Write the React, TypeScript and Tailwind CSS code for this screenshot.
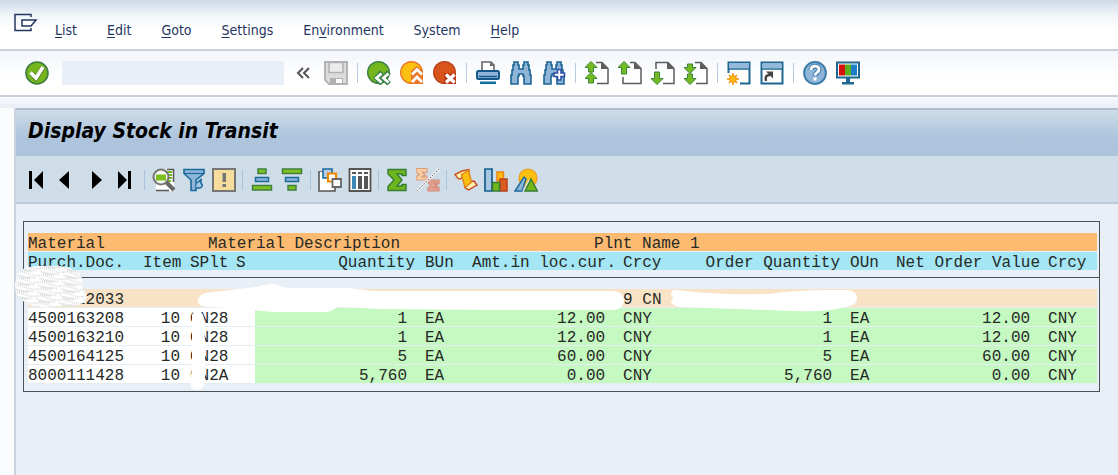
import type { ReactNode } from 'react'

const menuItems = [
  { before: '', key: 'L', after: 'ist' },
  { before: '', key: 'E', after: 'dit' },
  { before: '', key: 'G', after: 'oto' },
  { before: '', key: 'S', after: 'ettings' },
  { before: 'En', key: 'v', after: 'ironment' },
  { before: 'S', key: 'y', after: 'stem' },
  { before: '', key: 'H', after: 'elp' },
]

const rows = [
  { doc: '4500163208', item: '10', plant: 'CN28', qty: '1', amount: '12.00' },
  { doc: '4500163210', item: '10', plant: 'CN28', qty: '1', amount: '12.00' },
  { doc: '4500164125', item: '10', plant: 'CN28', qty: '5', amount: '60.00' },
  { doc: '8000111428', item: '10', plant: 'CN2A', qty: '5,760', amount: '0.00' },
]

const Svg = ({ children }: { children: ReactNode }) => (
  <svg viewBox="0 0 24 24" className="block w-6 h-6" fill="none" aria-hidden="true">
    {children}
  </svg>
)

const IconButton = ({ label, children }: { label: string; children: ReactNode }) => (
  <button type="button" aria-label={label} title={label} className="shrink-0 w-6 h-6">
    <Svg>{children}</Svg>
  </button>
)

const Binoculars = () => (
  <path
    d="M5 1h4v3h1v4h4V4h1V1h4v3h1v5h1v5h1v9h-7v-8h-1v-2h-4v2H9v8H2v-9h1V9h1V4h1z"
    fill="#8fb5d8"
    stroke="#1c6594"
    strokeWidth="1.6"
  />
)

const Page = ({ d }: { d: string }) => (
  <>
    <path d={d} fill="none" stroke="#5c5c5c" strokeWidth="1.5" />
    <path d="M16 1v7h7z" fill="#5c5c5c" />
  </>
)

const Arrow = ({ d }: { d: string }) => (
  <path d={d} fill="#74ba22" stroke="#3c8436" strokeWidth="1" />
)

const Separator = () => <span className="shrink-0 w-px h-5 bg-[#b3cbe3]" />

const AlvSeparator = () => <span className="shrink-0 w-0.5 h-5 border-l border-[#a9c3dc]" />

function SystemToolbar() {
  return (
    <div className="flex items-center gap-[9px] h-11.5 pl-[25px] border-b-2 border-[#c8d0da] bg-linear-to-b from-[#f2f5fa] to-white to-60%">
      <IconButton label="Enter">
        <circle cx="12" cy="12" r="11" fill="#74b61c" stroke="#3d7c46" strokeWidth="1.6" />
        <path d="M6 12l5 5 7.5-11" stroke="#5c8d2b" strokeWidth="5.4" />
        <path d="M5.5 11.5l5.5 5.5 7-11" stroke="#fff" strokeWidth="3.6" />
      </IconButton>
      <input
        aria-label="Command"
        className="w-[222px] h-6 ml-1 px-1 bg-[#e8eff6] text-sm outline-none"
      />
      <button type="button" aria-label="Collapse command field" className="w-6 h-6 -mx-px">
        <Svg>
          <path d="M11 7l-5 5 5 5M17 7l-5 5 5 5" stroke="#555" strokeWidth="2" />
        </Svg>
      </button>
      <IconButton label="Save">
        <path d="M1 1h22v22H5l-4-4z" fill="#dcdcdc" stroke="#b0b0b0" strokeWidth="1.8" />
        <path d="M5 1.500h14v10H5z" fill="#ececec" stroke="#b0b0b0" strokeWidth="1.5" />
        <path d="M6 23v-6h13v6z" fill="#b0b0b0" />
        <path d="M12 18h6v4h-6z" fill="#fff" />
      </IconButton>
      <Separator />
      <IconButton label="Back">
        <circle cx="11.500" cy="11.500" r="10.800" fill="#74b61c" stroke="#3d8048" strokeWidth="1.4" />
        <path d="M15 11l-5.500 6 5.500 6M22 11l-5.500 6 5.500 6" stroke="#3d8048" strokeWidth="5" />
        <path d="M14.500 12.500l-5 4.500 5 4.500M21.500 12.500l-5 4.500 5 4.500" stroke="#fff" strokeWidth="2.800" />
      </IconButton>
      <IconButton label="Exit">
        <circle cx="11.500" cy="11.500" r="10.800" fill="#fdc010" stroke="#e9782a" strokeWidth="1.4" />
        <path d="M11 10l6-5 6 5v13H11z" fill="#e9782a" />
        <path d="M12 13.500l5-5 5 5M12 21l5-5 5 5" stroke="#fff" strokeWidth="2.800" />
      </IconButton>
      <IconButton label="Cancel">
        <circle cx="11.500" cy="11.500" r="10.800" fill="#d9541a" stroke="#b9431c" strokeWidth="1.4" />
        <path d="M11 12h12v11H11z" fill="#bd3f1c" />
        <path d="M13 13.500l8.500 8M21.500 13.500l-8.500 8" stroke="#fff" strokeWidth="3.200" />
      </IconButton>
      <Separator />
      <IconButton label="Print">
        <path d="M6 9V1h9l3 3v5" fill="#fff" stroke="#666" strokeWidth="1.600" />
        <path d="M14 1v4h4z" fill="#666" />
        <rect x="1" y="10" width="22" height="8" rx="1.500" fill="#8fb5d8" stroke="#14588a" strokeWidth="2" />
        <path d="M3 15.500h18" stroke="#14588a" strokeWidth="1.500" />
        <path d="M4 20.500h16v2.500H4z" fill="#0f6f9c" />
      </IconButton>
      <IconButton label="Find">
        <Binoculars />
      </IconButton>
      <IconButton label="Find next">
        <Binoculars />
        <path d="M15.500 8.500h3.500v3.500h3.500v3.500H19V19h-3.500v-3.500H12V12h3.500z" fill="#fff" stroke="#2c4fa2" strokeWidth="1.600" />
      </IconButton>
      <Separator />
      <IconButton label="First page">
        <Page d="M11 1.500h6l6 6V22.500H12" />
        <Arrow d="M6 .5L12 6.500H8.500V11h-5V6.500H0z" />
        <Arrow d="M6 11.500l6 6H8.500V22h-5v-4.500H0z" />
      </IconButton>
      <IconButton label="Previous page">
        <Page d="M12 1.500h5l6 6V22.500H5V16" />
        <Arrow d="M6 .5l6 6H8.500V13h-5V6.500H0z" />
      </IconButton>
      <IconButton label="Next page">
        <Page d="M5 8V1.500h12l6 6V22.500H12" />
        <Arrow d="M6 23.500l-6-6h3.500V11h5v6.500H12z" />
      </IconButton>
      <IconButton label="Last page">
        <Page d="M11 1.500h6l6 6V22.500H12" />
        <Arrow d="M6 12.500l-6-6h3.500V3h5v3.500H12z" />
        <Arrow d="M6 23.500l-6-6h3.500V13h5v4.500H12z" />
      </IconButton>
      <Separator />
      <IconButton label="Create session">
        <path d="M1.500 12V1.500h21v21H13" fill="#fff" stroke="#1f6791" strokeWidth="2" />
        <path d="M2 2h20v5H2z" fill="#94b9da" />
        <path d="M1 8h22" stroke="#1f6791" strokeWidth="1.500" />
        <path d="M6 12v12M0 18h12M2 14l8 8M10 14l-8 8" stroke="#f29400" strokeWidth="1.500" />
        <circle cx="6" cy="18" r="3.400" fill="#fdb813" stroke="#f29400" />
      </IconButton>
      <IconButton label="Generate shortcut">
        <path d="M1.500 1.500h21v21h-21z" fill="#fff" stroke="#1f6791" strokeWidth="2" />
        <path d="M2.500 2.500h19V7h-19z" fill="#94b9da" />
        <path d="M1 8h22" stroke="#1f6791" strokeWidth="1.500" />
        <path d="M6 20c-1-4 0-6 4-6" stroke="#444" strokeWidth="2.500" />
        <path d="M6 10.500h7v7z" fill="#444" />
      </IconButton>
      <Separator />
      <IconButton label="Help">
        <circle cx="12" cy="12" r="10.900" fill="#8fb5d8" stroke="#3f7fab" strokeWidth="2" />
        <path d="M8 9c0-5 8-5 8-.5 0 3-4 3-4 6.500" stroke="#3f7fab" strokeWidth="5" />
        <path d="M8 9c0-5 8-5 8-.5 0 3-4 3-4 6" stroke="#fff" strokeWidth="2.800" />
        <path d="M10.500 16.500h3v3h-3z" fill="#fff" />
      </IconButton>
      <IconButton label="Customize local layout">
        <path d="M1 1.500h22v15H1z" fill="#fff" stroke="#1f6791" strokeWidth="2" />
        <path d="M3 3.500h6v11H3z" fill="#d5120f" />
        <path d="M9 3.500h6v11H9z" fill="#5cb020" />
        <path d="M15 3.500h6v11h-6z" fill="#1a7fc8" />
        <path d="M10 17h4v4h4v2.500H6V21h4z" fill="#1f6791" />
      </IconButton>
    </div>
  )
}

function ListToolbar() {
  return (
    <div className="flex items-center gap-1.5 h-12 pt-0.5 pl-2 border-b-2 border-[#bccbd9] bg-[#cfdde8]">
      <IconButton label="First column">
        <path d="M5 3h3v18H5zM19 3v18l-9-9z" fill="#000" />
      </IconButton>
      <IconButton label="Column left">
        <path d="M15 3v18l-10-9z" fill="#000" />
      </IconButton>
      <IconButton label="Column right">
        <path d="M8 3v18l10-9z" fill="#000" />
      </IconButton>
      <IconButton label="Last column">
        <path d="M14 3h3v18h-3zM4 3v18l9-9z" fill="#000" />
      </IconButton>
      <AlvSeparator />
      <IconButton label="Details">
        <path d="M4 1h18v22H4z" fill="#fff" />
        <path d="M15 1.500h6.500V14M4 22.500h13" stroke="#555" strokeWidth="1.500" />
        <path d="M15 4h5M15 7h5M15 10h5M15 13h4" stroke="#74b61c" strokeWidth="2" />
        <circle cx="9" cy="9" r="7.500" fill="#f6f8f2" stroke="#777" strokeWidth="2" />
        <path d="M4 6.500h10v6H4z" fill="#7cc01e" />
        <path d="M14.500 14.500l7.500 7.500" stroke="#666" strokeWidth="4" />
      </IconButton>
      <IconButton label="Set filter">
        <path d="M2 1.500h20v4L14 12v10.500h-5V12L2 5.500z" fill="#8fb5d8" stroke="#1a6a9c" strokeWidth="1.600" />
        <path d="M2 5.500h20" stroke="#1a6a9c" strokeWidth="1.200" />
        <path d="M15 15l4-3.500v4c2 1 2 3-1 4.500h-4" fill="#a7c6e2" stroke="#1a6a9c" strokeWidth="1.500" />
      </IconButton>
      <IconButton label="Check">
        <path d="M1 1h22v22H1z" fill="#f7dd9c" stroke="#777" strokeWidth="2" />
        <path d="M10.500 5h3.500v9h-3.500zM10.500 16h3.500v3h-3.500z" fill="#777" />
      </IconButton>
      <AlvSeparator />
      <IconButton label="Sort ascending">
        <path d="M8 1h8v4.500H8zM2.500 17.500h19v4.500h-19z" fill="#7fc01e" stroke="#3f8040" strokeWidth="1.500" />
        <path d="M5.500 9.500h13v4h-13z" fill="#8fb5d8" stroke="#1a6a9c" strokeWidth="1.500" />
      </IconButton>
      <IconButton label="Sort descending">
        <path d="M2.500 1h19v4.500h-19zM8 17.500h8v4.500H8z" fill="#7fc01e" stroke="#3f8040" strokeWidth="1.500" />
        <path d="M5.500 9.500h13v4h-13z" fill="#8fb5d8" stroke="#1a6a9c" strokeWidth="1.500" />
      </IconButton>
      <AlvSeparator />
      <IconButton label="Select layout">
        <path d="M4 4H1v19h16v-4" fill="#fff" stroke="#555" strokeWidth="1.600" />
        <path d="M2 4h13v18H2z" fill="#fff" />
        <path d="M5 1h9v9H5z" fill="#b6cde4" stroke="#1a6a9c" strokeWidth="1.600" />
        <path d="M10 5.500h8v8h-8z" fill="#fff" stroke="#f08c00" strokeWidth="2.200" />
        <path d="M14.500 11h8.500v8h-8.500z" fill="#fff" stroke="#666" strokeWidth="1.800" />
      </IconButton>
      <IconButton label="Change layout">
        <path d="M1.500 1h21v22h-21z" fill="#fff" stroke="#555" strokeWidth="1.800" />
        <path d="M4 4h4v2H4zM10 4h4v2h-4zM16 4h4v2h-4zM10 8h4v13h-4zM16 8h4v13h-4z" fill="#555" />
        <path d="M4 8h4v13H4z" fill="#3c88b8" />
      </IconButton>
      <AlvSeparator />
      <IconButton label="Total">
        <path d="M2 1.500h18v6h-4V6h-5l5 6-5 6h5v-1.500h4v6H2v-4l6-6.500-6-6z" fill="#6fb61c" stroke="#347d35" strokeWidth="1.400" />
      </IconButton>
      <IconButton label="Subtotal">
        <path d="M0 .5h11v4H8.500L6 4l3 2.500L6 9h3V8h2v4H0V9l3-2.500L0 4z" fill="#f3cfa2" stroke="#e09a80" strokeWidth="1.200" />
        <path d="M12 12h11v4h-2v-1h-3l3 2.500-3 2.500h3v-1h2v4H12v-3l3-2.500-3-2.500z" fill="#dfa090" stroke="#d58a78" strokeWidth="1.200" />
        <path d="M1 23L23 1" stroke="#fff" strokeWidth="2.500" />
        <path d="M1 23L23 1" stroke="#8c8c8c" strokeWidth="1.200" strokeDasharray="2 1" />
      </IconButton>
      <AlvSeparator />
      <IconButton label="Export">
        <path d="M1 6.500L8 3l7-1.500v3L10 8l-4 3-2-.5z" fill="#fdf0b0" stroke="#c8501c" strokeWidth="1.400" />
        <path d="M11 19.500l3.500 2.500 8.500-5-3-4-5 1z" fill="#fdf0b0" stroke="#c8401c" strokeWidth="1.400" />
        <path d="M7.500 6.500l7-4 3 11.500-6.500 5.500z" fill="#fdc010" stroke="#e08414" strokeWidth="1.400" />
      </IconButton>
      <IconButton label="Graphic">
        <path d="M1 1h7v22H1z" fill="#a7c6e2" stroke="#155d8e" strokeWidth="1.700" />
        <path d="M13 4h6.500v9H13z" fill="#fdb813" stroke="#ea8414" strokeWidth="1.500" />
        <path d="M16 11h7v12h-7z" fill="#dc5c20" stroke="#b9431c" strokeWidth="1.500" />
        <path d="M8.500 14.500h7V23h-7z" fill="#74b61c" stroke="#347d35" strokeWidth="1.500" />
      </IconButton>
      <IconButton label="Change graphic">
        <circle cx="14" cy="10" r="9" fill="#fdc010" stroke="#f29a20" strokeWidth="1.200" />
        <path d="M1 23l9-14 2 2-4 12z" fill="#8fb5d8" stroke="#1a6a9c" strokeWidth="1.400" />
        <path d="M11 23l6-12 6.500 12z" fill="#74b61c" stroke="#347d35" strokeWidth="1.400" />
        <path d="M9 23l6-11" stroke="#cfdde8" strokeWidth="1.400" />
      </IconButton>
    </div>
  )
}

const ListColumns = () => (
  <colgroup>
    <col className="w-[115px]" />
    <col className="w-[47px]" />
    <col className="w-[46px]" />
    <col className="w-[19px]" />
    <col className="w-[170px]" />
    <col className="w-[47px]" />
    <col className="w-[151px]" />
    <col className="w-[77px]" />
    <col className="w-[150px]" />
    <col className="w-[41px]" />
    <col className="w-[157px]" />
    <col />
  </colgroup>
)

// White marker strokes covering the confidential parts of the list
const Redactions = () => (
  <svg
    viewBox="0 0 1077 170"
    className="absolute top-0 left-0 w-[1077px] h-[170px] overflow-visible pointer-events-none"
    aria-hidden="true"
  >
    <defs>
      <pattern id="stipple" width="23" height="7" patternUnits="userSpaceOnUse" patternTransform="rotate(9)">
        <path d="M0 1.500q6-1.500 12 0t11 0M1 4q8 2 20 0M4 6h12" fill="none" stroke="#b4b8bc" strokeWidth="1" strokeDasharray="1 1" />
      </pattern>
      <path id="smudge" d="M-6 50q8-7 26-6 22-1 30 4 10 3 8 17l4 6v9l-10 4H32q-14 4-26-1-16-7-15-21z" />
    </defs>
    <g fill="#fff">
      <use href="#smudge" />
      <path d="M174 77q2-6 14-7l45-5q15-5 20-2 6 3 12 3l60 0q15 2 24 3l240 0q11 1 11 9 0 9-10 10l-120 0-115-1q-28-2-42-2-6 6-15 5l-50 0q-30-3-60-5-9 0-10-1-5-1-4-7z" />
      <path d="M647 73q0-6 7-5 30 5 90 4 30-4 60-4l20 0q9 1 9 8 0 8-12 9-15 5-50 4l-115-4q-9-2-9-6 4-4 0-6z" />
      <path d="M170 89q9-2 10 8l1 24 0 38q-1 9-8 9t-7-9l2-12v-54z" />
    </g>
    <use href="#smudge" fill="url(#stipple)" />
  </svg>
)

function StockList() {
  return (
    <div className="relative mr-[18px] border border-[#4a4f54] font-['Liberation_Mono','Noto_Sans_CJK_SC',monospace] text-base leading-[14px] text-[#262a26] whitespace-pre">
      <div className="pt-[11px] pb-1.5 pl-1 pr-0.5 border-b border-[#4a4f54]">
        <table className="w-full table-fixed border-collapse">
          <ListColumns />
          <thead className="[&_th]:p-0 [&_th]:pt-1 [&_th]:font-normal text-left">
            <tr className="bg-[#fdbb71] border-b border-[#e8eff6]">
              <th colSpan={2}>Material</th>
              <th colSpan={4}><span className="pl-[18px]">Material Description</span></th>
              <th colSpan={6}><span className="pl-[122px]">Plnt Name 1</span></th>
            </tr>
            <tr className="bg-[#a5e6f5] border-b border-[#e8eff6]">
              <th>Purch.Doc.</th>
              <th>Item</th>
              <th>SPlt</th>
              <th>S</th>
              <th className="text-right"><span className="pr-2.5">Quantity</span></th>
              <th>BUn</th>
              <th className="text-right"><span className="pr-2">Amt.in loc.cur.</span></th>
              <th>Crcy</th>
              <th className="text-right"><span className="pr-2.5">Order Quantity</span></th>
              <th>OUn</th>
              <th className="text-right"><span className="pr-2">Net Order Value</span></th>
              <th>Crcy</th>
            </tr>
          </thead>
        </table>
      </div>
      <div className="pt-[11px] pb-[7px] pl-1 pr-0.5">
        <table className="w-full table-fixed border-collapse">
          <ListColumns />
          <tbody className="[&_td]:p-0 [&_td]:pt-1 [&_tr]:border-b [&_tr]:border-[#e4eef2]">
            <tr className="bg-[#f9e3c6]">
              <td colSpan={7}><span className="pl-12">22033</span></td>
              <td colSpan={5}>9 CN</td>
            </tr>
            {rows.map((row) => (
              <tr key={row.doc} className="bg-[#c6f8c1]">
                <td className="bg-white">{row.doc}</td>
                <td className="bg-white text-right"><span className="pr-2.5">{row.item}</span></td>
                <td className="bg-white">{row.plant}</td>
                <td className="bg-white" />
                <td className="text-right"><span className="pr-[18px]">{row.qty}</span></td>
                <td>EA</td>
                <td className="text-right"><span className="pr-[18px]">{row.amount}</span></td>
                <td>CNY</td>
                <td className="text-right"><span className="pr-[18px]">{row.qty}</span></td>
                <td>EA</td>
                <td className="text-right"><span className="pr-[18px]">{row.amount}</span></td>
                <td>CNY</td>
              </tr>
            ))}
          </tbody>
        </table>
      </div>
      <Redactions />
    </div>
  )
}

export default function App() {
  return (
    <div className="flex flex-col min-h-screen bg-[#fbfcfe] font-['DejaVu_Sans_Condensed','DejaVu_Sans',sans-serif]">
      <nav className="flex items-center h-[51px] pl-[14px] border-b-2 border-[#c8d0da] bg-linear-to-b from-[#cdd9e8] via-[#f1f4f9] via-30% to-white to-60%">
        <button type="button" aria-label="System menu" className="self-start mt-3">
          <svg viewBox="0 0 24 20" className="block w-6 h-5" fill="none" aria-hidden="true">
            <path d="M17 5V2.500H1v16h16V16" stroke="#22365f" strokeWidth="1.500" />
            <path d="M22 8H8v6h9z" fill="#fff" stroke="#22365f" strokeWidth="1.500" />
          </svg>
        </button>
        <div className="flex gap-[30px] pl-[17px] pt-2.5 text-sm leading-5 text-[#1f3564]">
          {menuItems.map((item) => (
            <button key={item.before + item.key + item.after} type="button">
              {item.before}
              <u className="underline-offset-2">{item.key}</u>
              {item.after}
            </button>
          ))}
        </div>
      </nav>
      <SystemToolbar />
      <div className="h-[11px] bg-linear-to-b from-[#f8fafc] to-[#e9eef6]" />
      <main className="flex flex-col grow ml-3.5 border-l-2 border-[#c9d4e0] bg-[#e8eff6]">
        <header className="flex items-center h-12 pb-1 pl-3 border-t-2 border-[#aebfd2] bg-linear-to-b from-[#cddce8] to-[#adc4dc] to-60%">
          <h1 className="font-bold italic text-[21px] leading-7 text-black">Display Stock in Transit</h1>
        </header>
        <ListToolbar />
        <div className="pt-[17px] pl-[7px]">
          <StockList />
        </div>
      </main>
    </div>
  )
}
